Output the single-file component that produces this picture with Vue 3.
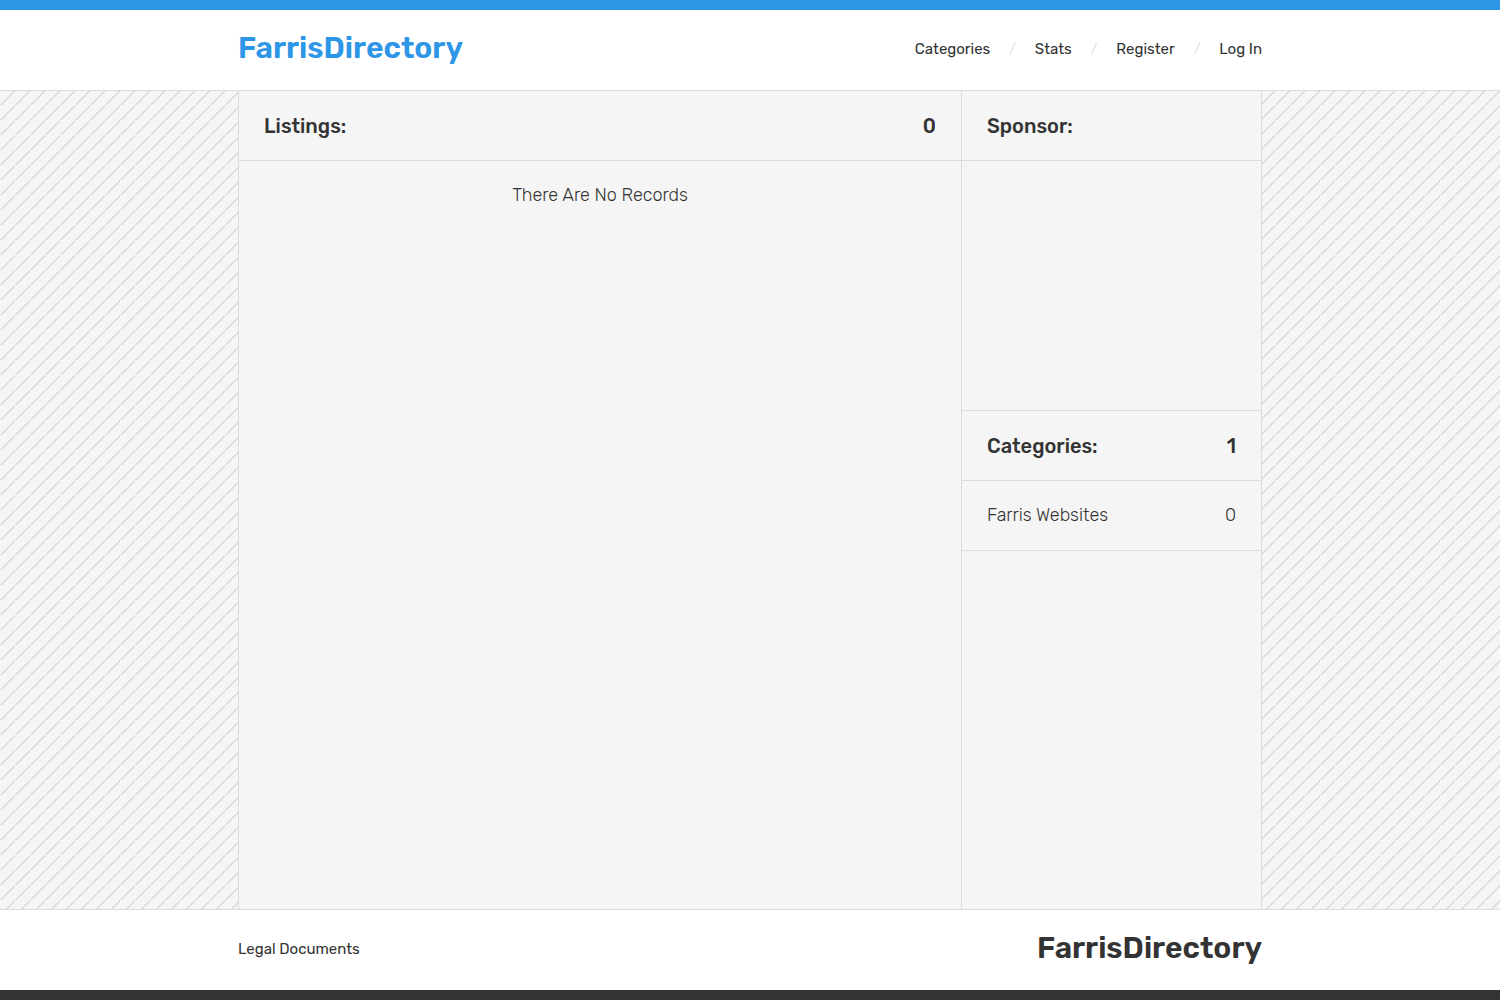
<script setup>
const navLinks = ['Categories', 'Stats', 'Register', 'Log In'];

const categories = [
	{ name: 'Farris Websites', count: 0 }
];
</script>

<template>
	<div class="page">
		<header class="header">
			<div class="header__inner">
				<a class="logo">FarrisDirectory</a>
				<nav class="nav">
					<template v-for="(link, index) in navLinks" :key="link">
						<span v-if="index"
							class="nav__divider">/</span>
						<a class="nav__link">{{ link }}</a>
					</template>
				</nav>
			</div>
		</header>

		<main class="main">
			<section class="listings">
				<h2 class="heading">
					<span>Listings:</span>
					<span>0</span>
				</h2>
				<p class="listings__empty">There Are No Records</p>
			</section>

			<aside class="sidebar">
				<h2 class="heading">
					<span>Sponsor:</span>
				</h2>
				<div class="sidebar__sponsor"></div>
				<h2 class="heading">
					<span>Categories:</span>
					<span>{{ categories.length }}</span>
				</h2>
				<a v-for="category in categories"
					:key="category.name"
					class="category">
					<span>{{ category.name }}</span>
					<span>{{ category.count }}</span>
				</a>
			</aside>
		</main>

		<footer class="footer">
			<div class="footer__inner">
				<a class="footer__link">Legal Documents</a>
				<a class="logo logo--dark">FarrisDirectory</a>
			</div>
		</footer>
	</div>
</template>

<style>
body {
	margin: 0;
}
</style>

<style scoped>
* {
	box-sizing: border-box;
}

.page {
	display: flex;
	flex-direction: column;
	min-height: 100vh;
	font-family: Rubik, Roboto, "Liberation Sans", sans-serif;
	color: #333;
	background-color: #f5f5f5;
	background-image: url("data:image/svg+xml,%3Csvg xmlns='http://www.w3.org/2000/svg' width='15' height='15'%3E%3Cpath d='M0.4 15.4L15.4 0.4' stroke='%23d2d2d2' stroke-width='1.1'/%3E%3C/svg%3E");
}

.header {
	height: 91px;
	border-top: 10px solid #2e96e7;
	border-bottom: 1px solid #dcdcdc;
	background-color: #fff;
}

.header__inner,
.footer__inner {
	display: flex;
	align-items: center;
	justify-content: space-between;
	width: 1024px;
	height: 80px;
	margin: 0 auto;
}

.logo {
	padding-bottom: 4px;
	font-size: 30px;
	font-weight: 600;
	line-height: 36px;
	color: #2e96e7;
}

.logo--dark {
	color: #333;
}

.nav {
	display: flex;
	align-items: center;
	padding-bottom: 2px;
	font-size: 15px;
	line-height: 20px;
}

.nav__divider {
	width: 44.6px;
	font-weight: 300;
	text-align: center;
	color: #dcdcdc;
}

.main {
	display: flex;
	flex: 1;
	width: 1024px;
	margin: 0 auto;
	border-right: 1px solid #dcdcdc;
	border-left: 1px solid #dcdcdc;
	background-color: #f5f5f5;
}

.listings {
	flex: 1;
}

.sidebar {
	width: 300px;
	border-left: 1px solid #dcdcdc;
}

.heading,
.category {
	display: flex;
	align-items: center;
	justify-content: space-between;
	height: 70px;
	margin: 0;
	padding: 0 25px;
	border-bottom: 1px solid #dcdcdc;
}

.heading {
	font-size: 20px;
	font-weight: 500;
	line-height: 30px;
}

.listings__empty {
	margin: 0;
	font-size: 18px;
	font-weight: 300;
	line-height: 69px;
	text-align: center;
}

.sidebar__sponsor {
	height: 250px;
	border-bottom: 1px solid #dcdcdc;
}

.category {
	font-size: 18px;
	font-weight: 300;
	line-height: 69px;
}

.footer {
	height: 91px;
	border-top: 1px solid #dcdcdc;
	border-bottom: 10px solid #333;
	background-color: #fff;
}

.footer__link {
	padding-bottom: 2px;
	font-size: 15px;
	line-height: 20px;
}
</style>
